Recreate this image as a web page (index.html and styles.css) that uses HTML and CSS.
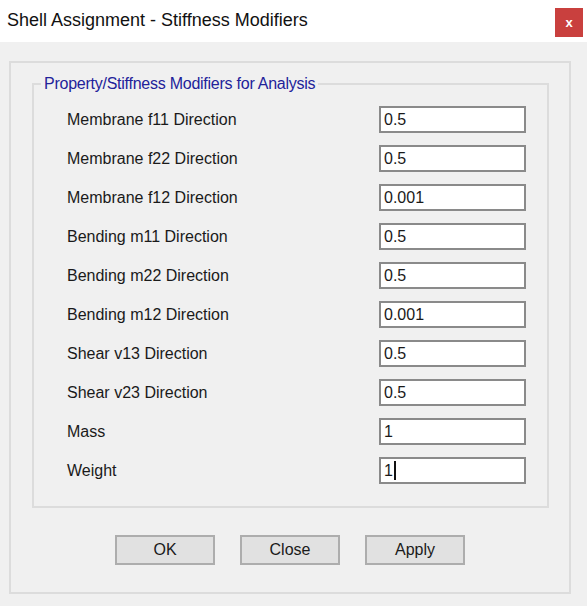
FILE: index.html
```html
<!DOCTYPE html>
<html>
<head>
<meta charset="utf-8">
<link rel="stylesheet" href="styles.css">
</head>
<body>
<div class="titlebar">
  <div class="title">Shell Assignment - Stiffness Modifiers</div>
  <div class="closebtn">x</div>
</div>
<div class="outer">
  <div class="group">
    <div class="legend">Property/Stiffness Modifiers for Analysis</div>
    <div class="row"><span class="label">Membrane f11 Direction</span><div class="input">0.5</div></div>
    <div class="row"><span class="label">Membrane f22 Direction</span><div class="input">0.5</div></div>
    <div class="row"><span class="label">Membrane f12 Direction</span><div class="input">0.001</div></div>
    <div class="row"><span class="label">Bending m11 Direction</span><div class="input">0.5</div></div>
    <div class="row"><span class="label">Bending m22 Direction</span><div class="input">0.5</div></div>
    <div class="row"><span class="label">Bending m12 Direction</span><div class="input">0.001</div></div>
    <div class="row"><span class="label">Shear v13 Direction</span><div class="input">0.5</div></div>
    <div class="row"><span class="label">Shear v23 Direction</span><div class="input">0.5</div></div>
    <div class="row"><span class="label">Mass</span><div class="input">1</div></div>
    <div class="row"><span class="label">Weight</span><div class="input">1<span class="caret"></span></div></div>
  </div>
  <div class="buttons">
    <div class="btn">OK</div>
    <div class="btn">Close</div>
    <div class="btn">Apply</div>
  </div>
</div>
</body>
</html>
```
FILE: styles.css
```css
html, body {
  margin: 0;
  padding: 0;
  background: #f0f0f0;
  font-family: "Liberation Sans", Arial, sans-serif;
  color: #1a1a1a;
}
body {
  width: 587px;
  height: 606px;
  overflow: hidden;
}
.titlebar {
  height: 42px;
  background: #ffffff;
  display: flex;
  align-items: flex-start;
  justify-content: space-between;
}
.title {
  font-size: 18px;
  margin-left: 7px;
  margin-top: 10px;
  color: #111;
}
.closebtn {
  width: 28px;
  height: 29px;
  margin-top: 8px;
  margin-right: 4px;
  background: #c9403e;
  color: #fff;
  font-weight: bold;
  font-size: 13px;
  display: flex;
  align-items: center;
  justify-content: center;
}
.outer {
  margin: 19px 16px 0 9px;
  border: 2px solid #dcdcdc;
  height: 533px;
  box-sizing: border-box;
  padding-top: 20px;
}
.group {
  position: relative;
  margin-left: 21px;
  width: 517px;
  box-sizing: border-box;
  border: 2px solid #dcdcdc;
  padding: 21px 0 22px 33px;
  display: flex;
  flex-direction: column;
  gap: 12px;
}
.legend {
  position: absolute;
  top: -10px;
  left: 7px;
  padding: 0 3px 0 3px;
  background: #f0f0f0;
  color: #22229a;
  font-size: 16px;
  letter-spacing: -0.25px;
}
.row {
  display: flex;
  align-items: center;
  height: 27px;
}
.label {
  width: 312px;
  font-size: 16px;
}
.input {
  width: 147px;
  height: 27px;
  box-sizing: border-box;
  border: 2px solid #8a8a8a;
  background: #fff;
  font-size: 16px;
  padding-left: 3px;
  display: flex;
  align-items: center;
}
.caret {
  display: inline-block;
  width: 2px;
  height: 19px;
  background: #111;
  margin-left: 1px;
}
.buttons {
  display: flex;
  justify-content: center;
  gap: 25px;
  margin-top: 27px;
}
.btn {
  width: 100px;
  height: 30px;
  box-sizing: border-box;
  background: #e1e1e1;
  border: 2px solid #adadad;
  font-size: 16px;
  display: flex;
  align-items: center;
  justify-content: center;
}
```
